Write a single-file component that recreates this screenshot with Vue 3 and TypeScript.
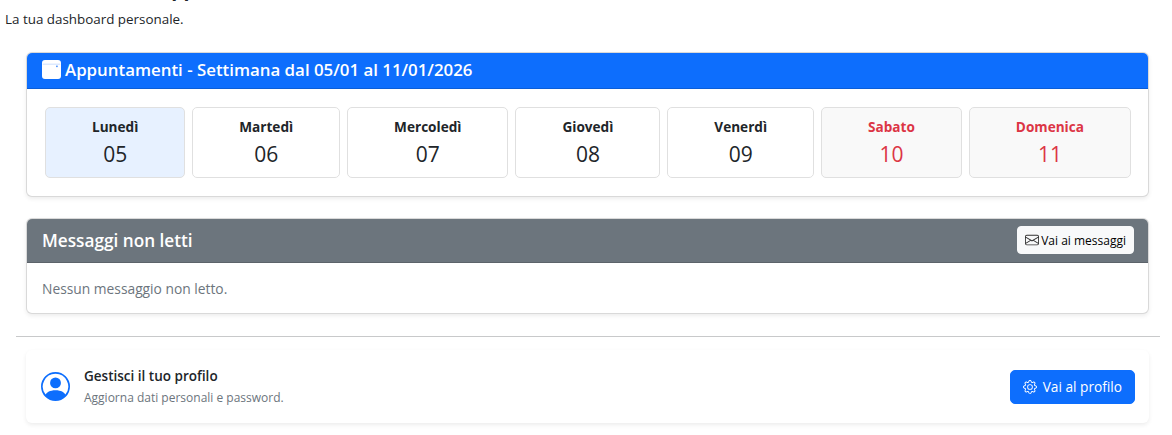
<script setup lang="ts">
interface Day { name: string; num: string; kind: '' | 'today' | 'weekend' }
const days: Day[] = [
  { name: 'Lunedì', num: '05', kind: 'today' },
  { name: 'Martedì', num: '06', kind: '' },
  { name: 'Mercoledì', num: '07', kind: '' },
  { name: 'Giovedì', num: '08', kind: '' },
  { name: 'Venerdì', num: '09', kind: '' },
  { name: 'Sabato', num: '10', kind: 'weekend' },
  { name: 'Domenica', num: '11', kind: 'weekend' },
]
</script>

<template>
  <div class="page">
    <h2 class="title">Benvenuto nell'App</h2>
    <p class="lead">La tua dashboard personale.</p>

    <div class="wrap">
      <section class="card appts">
        <header class="head head-blue">
          <svg class="cal" viewBox="0 0 16 16"><path fill="#fff" d="M2.5 0A2.5 2.5 0 0 0 0 2.5v11A2.5 2.5 0 0 0 2.5 16h11a2.5 2.5 0 0 0 2.5-2.5v-11A2.5 2.5 0 0 0 13.5 0h-11z"/><path fill="#b9d4fe" d="M.6 3.2h14.8v.5H.6z"/><rect x="11.8" y="4.7" width="1.5" height="1.3" fill="#5a9bfd"/></svg>
          <span>Appuntamenti - Settimana dal 05/01 al 11/01/2026</span>
        </header>
        <div class="days">
          <div v-for="d in days" :key="d.name" class="day" :class="d.kind">
            <div class="dname">{{ d.name }}</div>
            <div class="dnum">{{ d.num }}</div>
          </div>
        </div>
      </section>

      <section class="card msgs">
        <header class="head head-grey">
          <span>Messaggi non letti</span>
          <button class="light-btn">
            <svg class="env" viewBox="0 0 16 16" fill="currentColor"><path d="M0 4a2 2 0 0 1 2-2h12a2 2 0 0 1 2 2v8a2 2 0 0 1-2 2H2a2 2 0 0 1-2-2V4Zm2-1a1 1 0 0 0-1 1v.217l7 4.2 7-4.2V4a1 1 0 0 0-1-1H2Zm13 2.383-4.708 2.825L15 11.105V5.383Zm-.034 6.876-5.64-3.471L8 9.583l-1.326-.795-5.64 3.47A1 1 0 0 0 2 13h12a1 1 0 0 0 .966-.741ZM1 11.105l4.708-2.897L1 5.383v5.722Z"/></svg>
            Vai ai messaggi
          </button>
        </header>
        <div class="msg-body">Nessun messaggio non letto.</div>
      </section>
    </div>

    <hr class="rule" />

    <div class="wrap">
      <section class="profile">
        <svg class="avatar" viewBox="0 0 16 16" fill="#0d6efd"><path d="M11 6a3 3 0 1 1-6 0 3 3 0 0 1 6 0z"/><path fill-rule="evenodd" d="M0 8a8 8 0 1 1 16 0A8 8 0 0 1 0 8zm8-7a7 7 0 0 0-5.468 11.37C3.242 11.226 4.805 10 8 10s4.757 1.225 5.468 2.37A7 7 0 0 0 8 1z"/></svg>
        <div class="ptext">
          <div class="ptitle">Gestisci il tuo profilo</div>
          <div class="psub">Aggiorna dati personali e password.</div>
        </div>
        <button class="blue-btn">
          <svg class="gear" viewBox="0 0 16 16" fill="currentColor"><path d="M8 4.754a3.246 3.246 0 1 0 0 6.492 3.246 3.246 0 0 0 0-6.492zM5.754 8a2.246 2.246 0 1 1 4.492 0 2.246 2.246 0 0 1-4.492 0z"/><path d="M9.796 1.343c-.527-1.79-3.065-1.79-3.592 0l-.094.319a.873.873 0 0 1-1.255.52l-.292-.16c-1.64-.892-3.433.902-2.54 2.541l.159.292a.873.873 0 0 1-.52 1.255l-.319.094c-1.79.527-1.79 3.065 0 3.592l.319.094a.873.873 0 0 1 .52 1.255l-.16.292c-.892 1.64.901 3.434 2.541 2.54l.292-.159a.873.873 0 0 1 1.255.52l.094.319c.527 1.79 3.065 1.79 3.592 0l.094-.319a.873.873 0 0 1 1.255-.52l.292.16c1.64.893 3.434-.902 2.54-2.541l-.159-.292a.873.873 0 0 1 .52-1.255l.319-.094c1.79-.527 1.79-3.065 0-3.592l-.319-.094a.873.873 0 0 1-.52-1.255l.16-.292c.893-1.64-.902-3.433-2.541-2.54l-.292.159a.873.873 0 0 1-1.255-.52l-.094-.319zm-2.633.283c.246-.835 1.428-.835 1.674 0l.094.319a1.873 1.873 0 0 0 2.693 1.115l.291-.16c.764-.415 1.6.42 1.184 1.185l-.159.292a1.873 1.873 0 0 0 1.116 2.692l.318.094c.835.246.835 1.428 0 1.674l-.319.094a1.873 1.873 0 0 0-1.115 2.693l.16.291c.415.764-.42 1.6-1.185 1.184l-.291-.159a1.873 1.873 0 0 0-2.693 1.116l-.094.318c-.246.835-1.428.835-1.674 0l-.094-.319a1.873 1.873 0 0 0-2.692-1.115l-.292.16c-.764.415-1.6-.42-1.184-1.185l.159-.291A1.873 1.873 0 0 0 1.945 8.93l-.319-.094c-.835-.246-.835-1.428 0-1.674l.319-.094A1.873 1.873 0 0 0 3.06 4.377l-.16-.292c-.415-.764.42-1.6 1.185-1.184l.292.159a1.873 1.873 0 0 0 2.692-1.115l.094-.319z"/></svg>
          Vai al profilo
        </button>
      </section>
    </div>
  </div>
</template>

<style>
html, body { margin: 0; background: #fff; overflow: hidden; }
</style>

<style scoped>
.page {
  width: 1172px;
  height: 435px;
  overflow: hidden;
  box-sizing: border-box;
  font-family: "Open Sans", "Noto Sans", sans-serif;
  color: #212529;
}
.title {
  margin: -26px 0 0 5px;
  height: 30px;
  font-size: 19.5px;
  line-height: 30px;
  font-weight: 700;
}
.lead {
  margin: 6px 0 0 5px;
  font-size: 13.4px;
  line-height: 19px;
}
.wrap { padding: 0 23px 0 26px; }
.card {
  background: #fff;
  border: 1px solid rgba(0, 0, 0, 0.15);
  border-radius: 6px;
  box-shadow: 0 2px 4px rgba(0, 0, 0, 0.075);
  overflow: hidden;
}
.appts { margin-top: 23px; height: 145px; box-sizing: border-box; }
.msgs { margin-top: 21px; height: 96px; box-sizing: border-box; }
.head {
  display: flex;
  align-items: center;
  color: #fff;
  font-weight: 600;
  padding: 0 14px 0 15px;
}
.head-blue { background: #0d6efd; height: 36px; box-sizing: border-box; gap: 4px; font-size: 16.85px; border-bottom: 1px solid #0b5ed7; padding-bottom: 2px; }
.head-grey { background: #6c757d; height: 44px; box-sizing: border-box; justify-content: space-between; font-size: 17.2px; border-bottom: 1px solid #5c636a; padding-bottom: 1px; }
.cal { width: 19px; height: 19px; }
.days {
  display: flex;
  gap: 7px;
  padding: 18px 17px 0 18px;
}
.day {
  flex: 1 1 auto;
  height: 71px;
  box-sizing: border-box;
  border: 1px solid #e0e0e0;
  border-radius: 5px;
  text-align: center;
  padding: 10px 0 0;
}
.day.today { background: #e7f1ff; }
.day.weekend { background: #f9f9f9; color: #dc3545; }
.dname { font-size: 13.6px; font-weight: 700; line-height: 17px; }
.dnum { font-size: 21px; font-weight: 400; line-height: 28px; margin-top: 5px; }
.light-btn {
  display: inline-flex;
  align-items: center;
  gap: 2px;
  height: 28px;
  padding: 0 7px;
  background: #f8f9fa;
  border: 1px solid #f8f9fa;
  border-radius: 4px;
  color: #000;
  font: 400 12px "Open Sans", "Noto Sans", sans-serif;
}
.env { width: 14px; height: 14px; color: #333; }
.msg-body {
  padding: 16px 15px;
  font-size: 13.8px;
  line-height: 19px;
  color: #6c757d;
}
.rule {
  margin: 22px 12px 0 16px;
  border: 0;
  border-top: 1px solid #c8c9ca;
}
.profile {
  margin-top: 13px;
  height: 73px;
  display: flex;
  align-items: center;
  padding: 0 14px 0 15px;
  background: #fff;
  border-radius: 6px;
  box-shadow: 0 2px 4px rgba(0, 0, 0, 0.075);
}
.avatar { width: 29px; height: 29px; flex: none; }
.ptext { margin-left: 14px; flex: 1; }
.ptitle { font-size: 13.5px; font-weight: 600; line-height: 19px; }
.psub { font-size: 12px; line-height: 17px; color: #6c757d; margin-top: 3px; }
.blue-btn {
  display: inline-flex;
  align-items: center;
  gap: 6px;
  height: 34px;
  padding: 0 12px;
  background: #0d6efd;
  border: 1px solid #0d6efd;
  border-radius: 5px;
  color: #fff;
  font: 400 13.7px "Open Sans", "Noto Sans", sans-serif;
}
.gear { width: 14px; height: 14px; }
</style>
